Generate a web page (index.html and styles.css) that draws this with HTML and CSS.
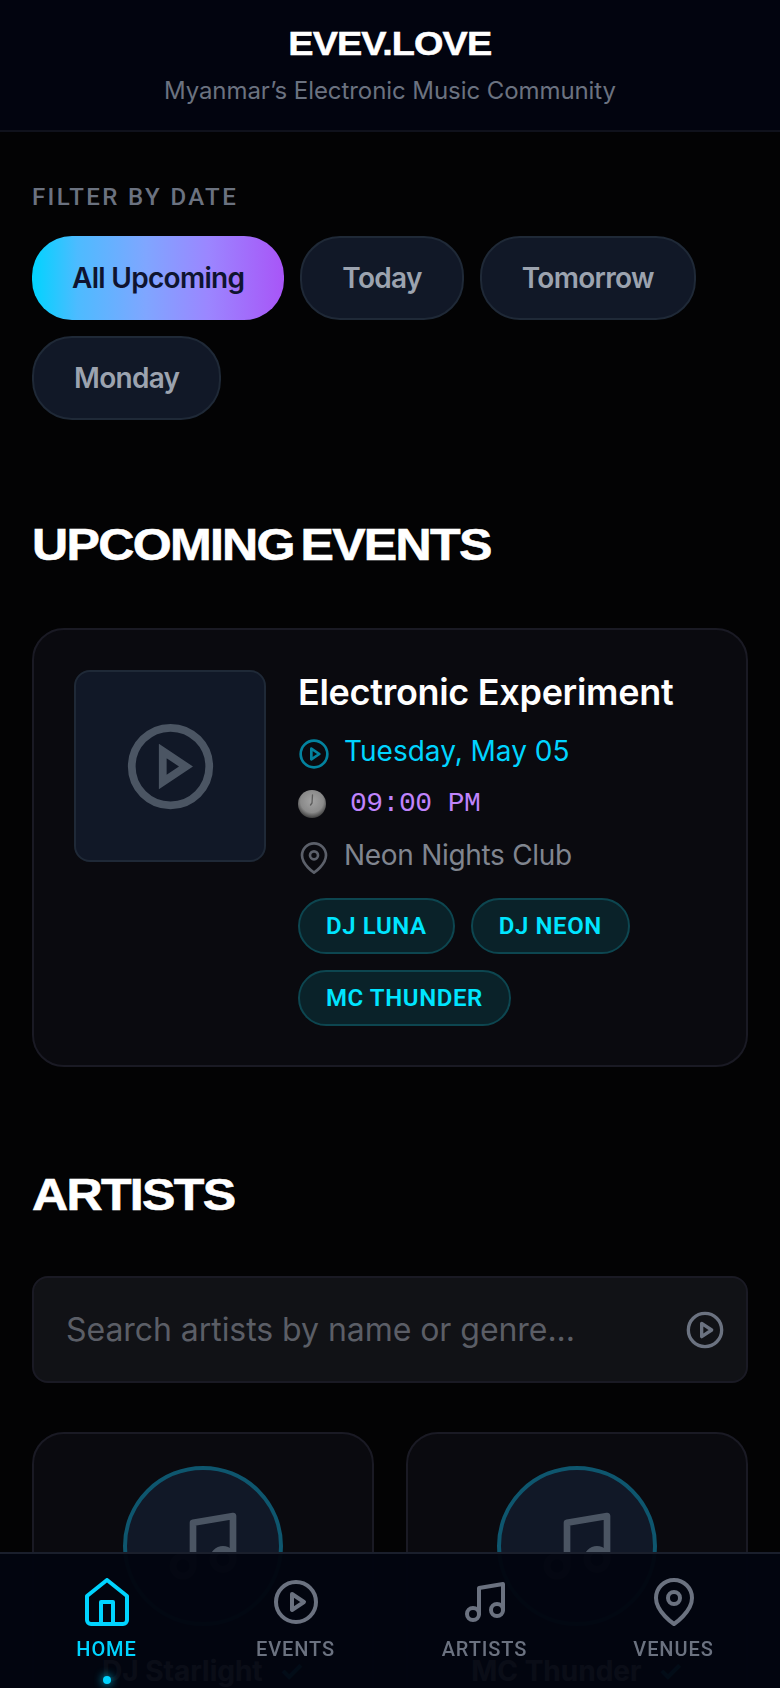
FILE: index.html
```html
<!DOCTYPE html>
<html lang="en">
<head>
<meta charset="utf-8">
<title>EVEV.LOVE</title>
<link rel="stylesheet" href="styles.css">
</head>
<body>
<header class="top">
  <h1 class="brand">EVEV.LOVE</h1>
  <p class="tagline">Myanmar’s Electronic Music Community</p>
</header>
<main class="main">
  <section class="filter">
    <div class="filter-label">FILTER BY DATE</div>
    <div class="chips">
      <button class="chip chip-on">All Upcoming</button>
      <button class="chip">Today</button>
      <button class="chip">Tomorrow</button>
      <button class="chip">Monday</button>
    </div>
  </section>
  <section class="events">
    <h2 class="heading">UPCOMING EVENTS</h2>
    <article class="event">
      <div class="thumb">
        <svg class="thumb-icon" viewBox="0 0 24 24"><circle cx="12" cy="12" r="10"/><polygon points="10 8 16 12 10 16 10 8"/></svg>
      </div>
      <div class="event-body">
        <h3 class="event-title">Electronic Experiment</h3>
        <div class="row row-date">
          <svg class="row-icon" viewBox="0 0 24 24"><circle cx="12" cy="12" r="10"/><polygon points="10 8 16 12 10 16 10 8"/></svg>
          <span>Tuesday, May 05</span>
        </div>
        <div class="row row-time">
          <svg class="clock" viewBox="0 0 28 28"><defs><radialGradient id="cg" cx="50%" cy="40%" r="58%"><stop offset="0" stop-color="#a2a2a2"/><stop offset=".7" stop-color="#8a8a8a"/><stop offset="1" stop-color="#454545"/></radialGradient></defs><circle cx="14" cy="14" r="14" fill="url(#cg)"/><path d="M14.5 5l-.5 8-1.5 2" stroke="#5c5c5c" stroke-width="1.3" fill="none"/></svg>
          <span>09:00 PM</span>
        </div>
        <div class="row row-place">
          <svg class="row-icon" viewBox="0 0 24 24"><path d="M21 10c0 7-9 13-9 13s-9-6-9-13a9 9 0 0 1 18 0z"/><circle cx="12" cy="10" r="3"/></svg>
          <span>Neon Nights Club</span>
        </div>
        <div class="tags">
          <span class="tag">DJ LUNA</span>
          <span class="tag">DJ NEON</span>
          <span class="tag">MC THUNDER</span>
        </div>
      </div>
    </article>
  </section>
  <section class="artists">
    <h2 class="heading">ARTISTS</h2>
    <div class="search">
      <span class="search-text">Search artists by name or genre...</span>
      <svg class="search-icon" viewBox="0 0 24 24"><circle cx="12" cy="12" r="10"/><polygon points="10 8 16 12 10 16 10 8"/></svg>
    </div>
    <div class="artist-grid">
      <article class="artist">
        <div class="avatar"><svg class="avatar-icon" viewBox="0 0 24 24"><path d="M9 18V5l12-2v13"/><circle cx="6" cy="18" r="3"/><circle cx="18" cy="16" r="3"/></svg></div>
        <div class="artist-name">DJ Starlight <span class="tick">✓</span></div>
      </article>
      <article class="artist">
        <div class="avatar"><svg class="avatar-icon" viewBox="0 0 24 24"><path d="M9 18V5l12-2v13"/><circle cx="6" cy="18" r="3"/><circle cx="18" cy="16" r="3"/></svg></div>
        <div class="artist-name">MC Thunder <span class="tick">✓</span></div>
      </article>
    </div>
  </section>
</main>
<nav class="nav">
  <a class="nav-item nav-on">
    <svg class="nav-icon" viewBox="0 0 24 24"><path d="M12 1l10 8v12a2 2 0 0 1-2 2H4a2 2 0 0 1-2-2V9z"/><path d="M9 23V12h6v11"/></svg>
    <span>HOME</span>
    <i class="nav-dot"></i>
  </a>
  <a class="nav-item">
    <svg class="nav-icon" viewBox="0 0 24 24"><circle cx="12" cy="12" r="10"/><polygon points="10 8 16 12 10 16 10 8"/></svg>
    <span>EVENTS</span>
  </a>
  <a class="nav-item">
    <svg class="nav-icon" viewBox="0 0 24 24"><path d="M9 18V5l12-2v13"/><circle cx="6" cy="18" r="3"/><circle cx="18" cy="16" r="3"/></svg>
    <span>ARTISTS</span>
  </a>
  <a class="nav-item">
    <svg class="nav-icon" viewBox="0 0 24 24"><path d="M21 10c0 7-9 13-9 13s-9-6-9-13a9 9 0 0 1 18 0z"/><circle cx="12" cy="10" r="3"/></svg>
    <span>VENUES</span>
  </a>
</nav>
</body>
</html>
```
FILE: styles.css
```css
* { box-sizing: border-box; }
html, body { margin: 0; height: 1688px; overflow: hidden; }
body { background: #030304; color: #fff; font-family: "Inter", "Liberation Sans", sans-serif; }
svg { fill: none; stroke: currentColor; stroke-width: 2; stroke-linecap: round; stroke-linejoin: round; flex: none; }

.top { height: 132px; background: #02040f; border-bottom: 2px solid #10121c; text-align: center; padding-top: 22px; }
.brand { width: fit-content; margin: 0 auto; font: 700 33.5px/44px "Liberation Sans", sans-serif; letter-spacing: -.8px; transform: scaleX(1.13); -webkit-text-stroke: .5px #fff; }
.tagline { margin: 9px 0 0; font: 400 24px/32px "Inter", sans-serif; color: #6b7280; letter-spacing: -.07px; }

.main { height: 1556px; overflow: hidden; padding: 49px 32px 0; }
.filter-label { font: 500 24px/32px "Roboto", sans-serif; color: #6b7280; letter-spacing: 2.4px; }
.chips { display: flex; flex-wrap: wrap; gap: 16px; margin-top: 23px; }
.chip { height: 84px; padding: 0 40px; border-radius: 40px; border: 2px solid #1f2937; background: #111827; color: #9ca3af; font: 600 28px/1 "Inter", sans-serif; letter-spacing: -.7px; }
.chip-on { border: 0; background: linear-gradient(90deg, #00d4ff 0%, #4dbbff 18%, #7fa6ff 45%, #9b86ff 70%, #a855f7 100%); color: #0f1430; }

.events { margin-top: 97px; }
.heading { width: fit-content; margin: 0; font: 700 44.7px/56px "Liberation Sans", sans-serif; letter-spacing: -1.5px; word-spacing: -5px; transform: scaleX(1.12); transform-origin: left center; -webkit-text-stroke: .6px #fff; }
.event { display: flex; gap: 32px; margin-top: 55px; padding: 40px 40px 39px; background: #0a0a0f; border: 2px solid #1a1a24; border-radius: 32px; }
.thumb { width: 192px; height: 192px; flex: none; display: flex; align-items: center; justify-content: center; background: #111827; border: 2px solid #1f2937; border-radius: 16px; }
.thumb-icon { width: 93px; height: 93px; color: #4b5563; stroke-linejoin: miter; }
.event-body { flex: 1; min-width: 0; }
.event-title { margin: 0; font: 600 36px/44px "Inter", sans-serif; letter-spacing: -.3px; }
.row { display: flex; align-items: center; gap: 14px; font-size: 28px; line-height: 36px; }
.row-date { margin-top: 19px; color: #00d4ff; }
.row-date .row-icon { opacity: .6; }
.row-time { margin-top: 17px; gap: 24px; color: #c084fc; font-family: "Liberation Mono", monospace; letter-spacing: -.5px; }
.row-place { margin-top: 15px; color: #80858f; letter-spacing: -.3px; }
.row-place .row-icon { color: #5c606a; }
.row-icon { width: 32px; height: 32px; margin: 5px 0 -1px; }
.clock { width: 28px; height: 28px; stroke: none; }
.tags { display: flex; flex-wrap: wrap; gap: 16px; margin-top: 25px; }
.tag { height: 56px; padding: 0 26px; display: flex; align-items: center; border-radius: 28px; border: 2px solid #0d4650; background: #0a2229; color: #00e5ff; font: 600 24px/1 "Roboto", sans-serif; letter-spacing: .6px; }

.artists { margin-top: 100px; }
.search { display: flex; align-items: center; justify-content: space-between; height: 107px; margin-top: 53px; padding: 0 21px 0 32px; background: #111216; border: 2px solid #1a1a24; border-radius: 16px; }
.search-text { font-size: 32px; color: #5b5e66; letter-spacing: -.05px; }
.search-icon { width: 40px; height: 40px; color: #6b7280; }
.artist-grid { display: grid; grid-template-columns: 1fr 1fr; gap: 32px; margin-top: 49px; }
.artist { padding: 32px 0 0; height: 360px; background: #0a0a0f; border: 2px solid #1a1a24; border-radius: 32px; display: flex; flex-direction: column; align-items: center; }
.avatar { width: 160px; height: 160px; border-radius: 50%; background: #111827; border: 4px solid #0e566e; display: flex; align-items: center; justify-content: center; }
.avatar-icon { width: 80px; height: 80px; color: #4b5563; }
.artist-name { margin-top: 27px; font: 700 28px/36px "Inter", sans-serif; color: #fff; }
.tick { color: #00d4ff; margin-left: 10px; }

.nav { position: fixed; left: 0; right: 0; bottom: 0; height: 136px; display: grid; grid-template-columns: repeat(4, 1fr); padding: 0 12px; background: rgba(2, 5, 16, .97); border-top: 2px solid #1a1f2c; }
.nav-item { position: relative; display: flex; flex-direction: column; align-items: center; padding-top: 24px; color: #6b7280; font: 500 20px/26px "Roboto", sans-serif; letter-spacing: .9px; }
.nav-on { color: #00d4ff; }
.nav-icon { width: 48px; height: 48px; margin-bottom: 10px; }
.nav-dot { position: absolute; left: 50%; bottom: 4px; width: 8px; height: 8px; margin-left: -4px; border-radius: 50%; background: #00d4ff; box-shadow: 0 0 10px #00d4ff; }
```
